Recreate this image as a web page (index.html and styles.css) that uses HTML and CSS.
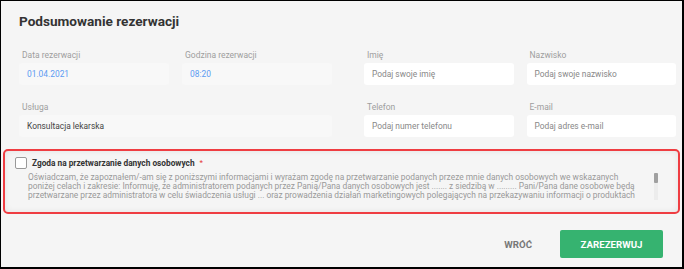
FILE: index.html
```html
<!DOCTYPE html>
<html>
  <head>
    <link rel="stylesheet" href="styles.css">
  </head>
  <body>
    <div class="summary">
      <h1 class="summary-title">Podsumowanie rezerwacji</h1>

      <div class="fields">
        <div class="group">
          <div class="field">
            <span class="field-label">Data rezerwacji</span>
            <div class="field-box readonly value-blue">01.04.2021</div>
          </div>
          <div class="field">
            <span class="field-label">Godzina rezerwacji</span>
            <div class="field-box readonly value-blue">08:20</div>
          </div>
          <div class="field wide">
            <span class="field-label">Usługa</span>
            <div class="field-box readonly">Konsultacja lekarska</div>
          </div>
        </div>
        <div class="group">
          <div class="field">
            <span class="field-label">Imię</span>
            <div class="field-box input">Podaj swoje imię</div>
          </div>
          <div class="field">
            <span class="field-label">Nazwisko</span>
            <div class="field-box input">Podaj swoje nazwisko</div>
          </div>
          <div class="field">
            <span class="field-label">Telefon</span>
            <div class="field-box input">Podaj numer telefonu</div>
          </div>
          <div class="field">
            <span class="field-label">E-mail</span>
            <div class="field-box input">Podaj adres e-mail</div>
          </div>
        </div>
      </div>

      <div class="consent">
        <div class="consent-header">
          <span class="checkbox"></span>
          <span class="consent-title">Zgoda na przetwarzanie danych osobowych</span>
          <span class="required">*</span>
        </div>
        <div class="consent-body">
          <div class="consent-scroll">
            <p class="consent-text">Oświadczam, że zapoznałem/-am się z poniższymi informacjami i wyrażam zgodę na przetwarzanie podanych przeze mnie danych osobowych we wskazanych poniżej celach i zakresie: Informuję, że administratorem podanych przez Panią/Pana danych osobowych jest ....... z siedzibą w ......... Pani/Pana dane osobowe będą przetwarzane przez administratora w celu świadczenia usługi ... oraz prowadzenia działań marketingowych polegających na przekazywaniu informacji o produktach</p>
          </div>
          <div class="scrollbar">
            <div class="scrollbar-thumb"></div>
          </div>
        </div>
      </div>

      <div class="actions">
        <button class="btn btn-back">WRÓĆ</button>
        <button class="btn btn-submit">ZAREZERWUJ</button>
      </div>
    </div>
  </body>
</html>
```

FILE: styles.css
```css
* {
  box-sizing: border-box;
  font-family: Roboto, "Liberation Sans", sans-serif;
}

html, body {
  margin: 0;
  height: 100%;
}

body {
  background-color: #f5f5f5;
}

.summary {
  height: 269px;
  border-style: solid;
  border-color: #000;
  border-width: 1px 2px 2px 1px;
  padding: 10px 6px 0 18px;
}

.summary-title {
  margin: 0;
  font-size: 13.6px;
  line-height: 20px;
  font-weight: 700;
  color: #333;
}

.fields {
  display: grid;
  grid-template-columns: 313px 312px;
  column-gap: 32px;
  margin-top: 18px;
}

.group {
  display: grid;
  grid-template-columns: 1fr 1fr;
  column-gap: 13px;
  row-gap: 16px;
}

.field.wide {
  grid-column: span 2;
}

.field-label {
  display: block;
  font-size: 8.5px;
  line-height: 12px;
  color: #9e9e9e;
  padding-left: 3px;
  margin-bottom: 2px;
}

.field-box {
  height: 22px;
  line-height: 22px;
  padding-left: 8px;
  font-size: 8.4px;
  border-radius: 3px;
}

.readonly {
  background: #f8f8f8;
  color: #444;
}

.value-blue {
  color: #5c9bf2;
}

.input {
  background: #fff;
  color: #888;
}

.consent {
  margin: 12px -4px 0 -16px;
  height: 65px;
  border: 2px solid #ef3d42;
  border-radius: 5px;
  box-shadow: inset 0 0 6px rgba(0, 0, 0, 0.08);
  padding: 5.5px 20px 0 10px;
}

.consent-header {
  display: flex;
  align-items: center;
}

.checkbox {
  width: 12px;
  height: 12px;
  border: 1px solid #999;
  border-radius: 2px;
  background: #fff;
  margin-right: 5px;
}

.consent-title {
  font-size: 8.3px;
  font-weight: 700;
  color: #333;
}

.required {
  color: #e53935;
  font-size: 8px;
  margin-left: 5px;
}

.consent-body {
  display: flex;
  margin-top: 4.5px;
  height: 27px;
}

.consent-scroll {
  flex: 1;
  overflow: hidden;
  padding-left: 13px;
  padding-right: 19px;
}

.consent-text {
  margin: 0;
  font-size: 8.4px;
  line-height: 9px;
  color: #999;
}

.scrollbar {
  width: 4px;
  background: #ececec;
}

.scrollbar-thumb {
  height: 10px;
  background: #a0a0a0;
  border-radius: 1px;
}

.actions {
  display: flex;
  justify-content: flex-end;
  align-items: center;
  gap: 28px;
  margin-top: 16px;
  padding-right: 13px;
}

.btn {
  border: none;
  font-size: 9.7px;
  font-weight: 700;
  cursor: pointer;
}

.btn-back {
  background: none;
  color: #777;
  padding: 0;
}

.btn-submit {
  width: 103px;
  height: 28px;
  background: #36b370;
  color: #fff;
  border-radius: 2px;
}
```
